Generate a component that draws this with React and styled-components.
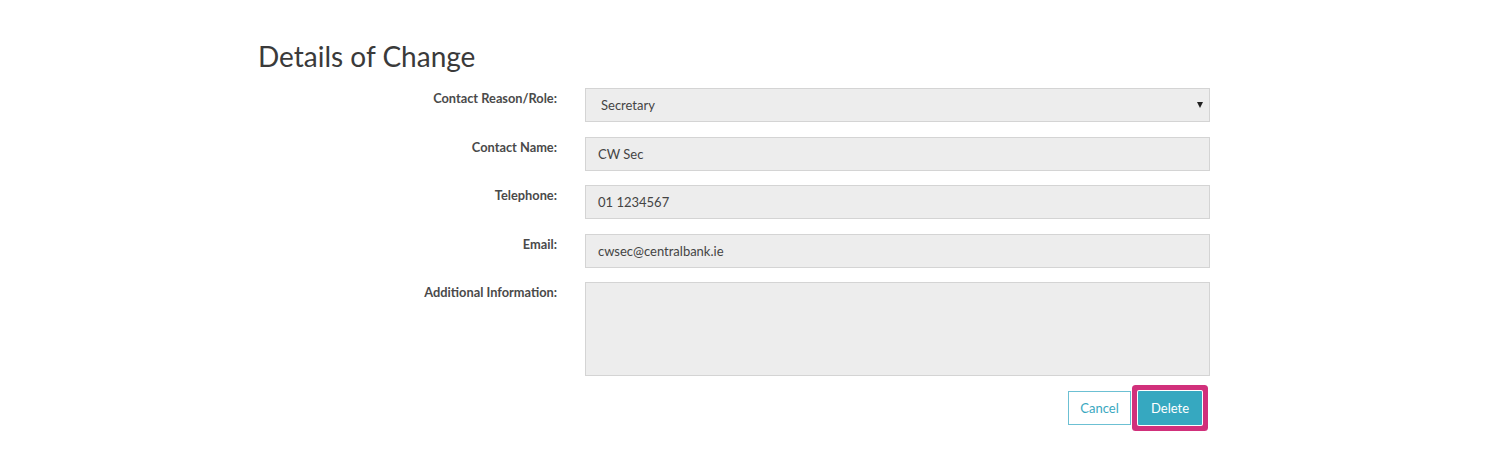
import React from 'react'
import styled, { createGlobalStyle } from 'styled-components'

const GlobalStyle = createGlobalStyle`
  body {
    margin: 0;
    background: #fff;
    font-family: Lato, "Open Sans", sans-serif;
    color: #444;
  }
`

const fields = [
  { label: 'Contact Reason/Role:', value: 'Secretary', kind: 'select' },
  { label: 'Contact Name:', value: 'CW Sec' },
  { label: 'Telephone:', value: '01 1234567' },
  { label: 'Email:', value: 'cwsec@centralbank.ie' },
  { label: 'Additional Information:', value: '', kind: 'area' },
]

const App = () => {
  return (
    <Page>
      <GlobalStyle />
      <Heading>Details of Change</Heading>
      <Form>
        {fields.map((f) => (
          <Row key={f.label}>
            <Label>{f.label}</Label>
            {f.kind === 'select' ? (
              <Field select>
                <span>{f.value}</span>
                <Caret />
              </Field>
            ) : (
              <Field tall={f.kind === 'area'}>{f.value}</Field>
            )}
          </Row>
        ))}
        <Actions>
          <CancelButton>Cancel</CancelButton>
          <DeleteButton>Delete</DeleteButton>
        </Actions>
      </Form>
    </Page>
  )
}

export default App

const Page = styled.div`
  padding: 38px 0 40px 258px;
  width: 952px;
`

const Heading = styled.h1`
  margin: 0 0 14px;
  font-size: 28px;
  font-weight: 400;
  line-height: 36px;
  color: #3a3a3a;
`

const Form = styled.div`
  display: flex;
  flex-direction: column;
  gap: 14.5px;
`

const Row = styled.div`
  display: grid;
  grid-template-columns: 299px 625px;
  column-gap: 28px;
  align-items: start;
`

const Label = styled.div`
  text-align: right;
  font-size: 12.8px;
  font-weight: 700;
  line-height: 18px;
  padding-top: 1px;
  color: #4a4a4a;
`

const Field = styled.div`
  box-sizing: border-box;
  height: ${(p) => (p.tall ? '94px' : '34px')};
  background: #ededed;
  border: 1px solid #d4d4d4;
  padding: 0 ${(p) => (p.select ? '15px' : '12px')};
  display: flex;
  align-items: ${(p) => (p.tall ? 'flex-start' : 'center')};
  justify-content: space-between;
  font-size: 13px;
  color: #444;
`

const Caret = styled.span`
  width: 0;
  height: 0;
  margin-right: -9px;
  border-left: 3.5px solid transparent;
  border-right: 3.5px solid transparent;
  border-top: 6px solid #222;
`

const Actions = styled.div`
  display: flex;
  justify-content: flex-end;
  gap: 7px;
  padding-right: 8px;
`

const CancelButton = styled.button`
  box-sizing: border-box;
  width: 63px;
  height: 34px;
  background: #fff;
  border: 1px solid #6cc0d3;
  color: #3aa8c0;
  font-family: Lato, sans-serif;
  font-size: 13px;
  cursor: pointer;
`

const DeleteButton = styled.button`
  box-sizing: border-box;
  width: 64px;
  height: 34px;
  background: #36a8c0;
  border: none;
  color: #fff;
  font-family: Lato, sans-serif;
  font-size: 13px;
  cursor: pointer;
  box-shadow: 0 0 0 1px #fff, 0 0 0 6px #d1307b;
  border-radius: 1px;
`
